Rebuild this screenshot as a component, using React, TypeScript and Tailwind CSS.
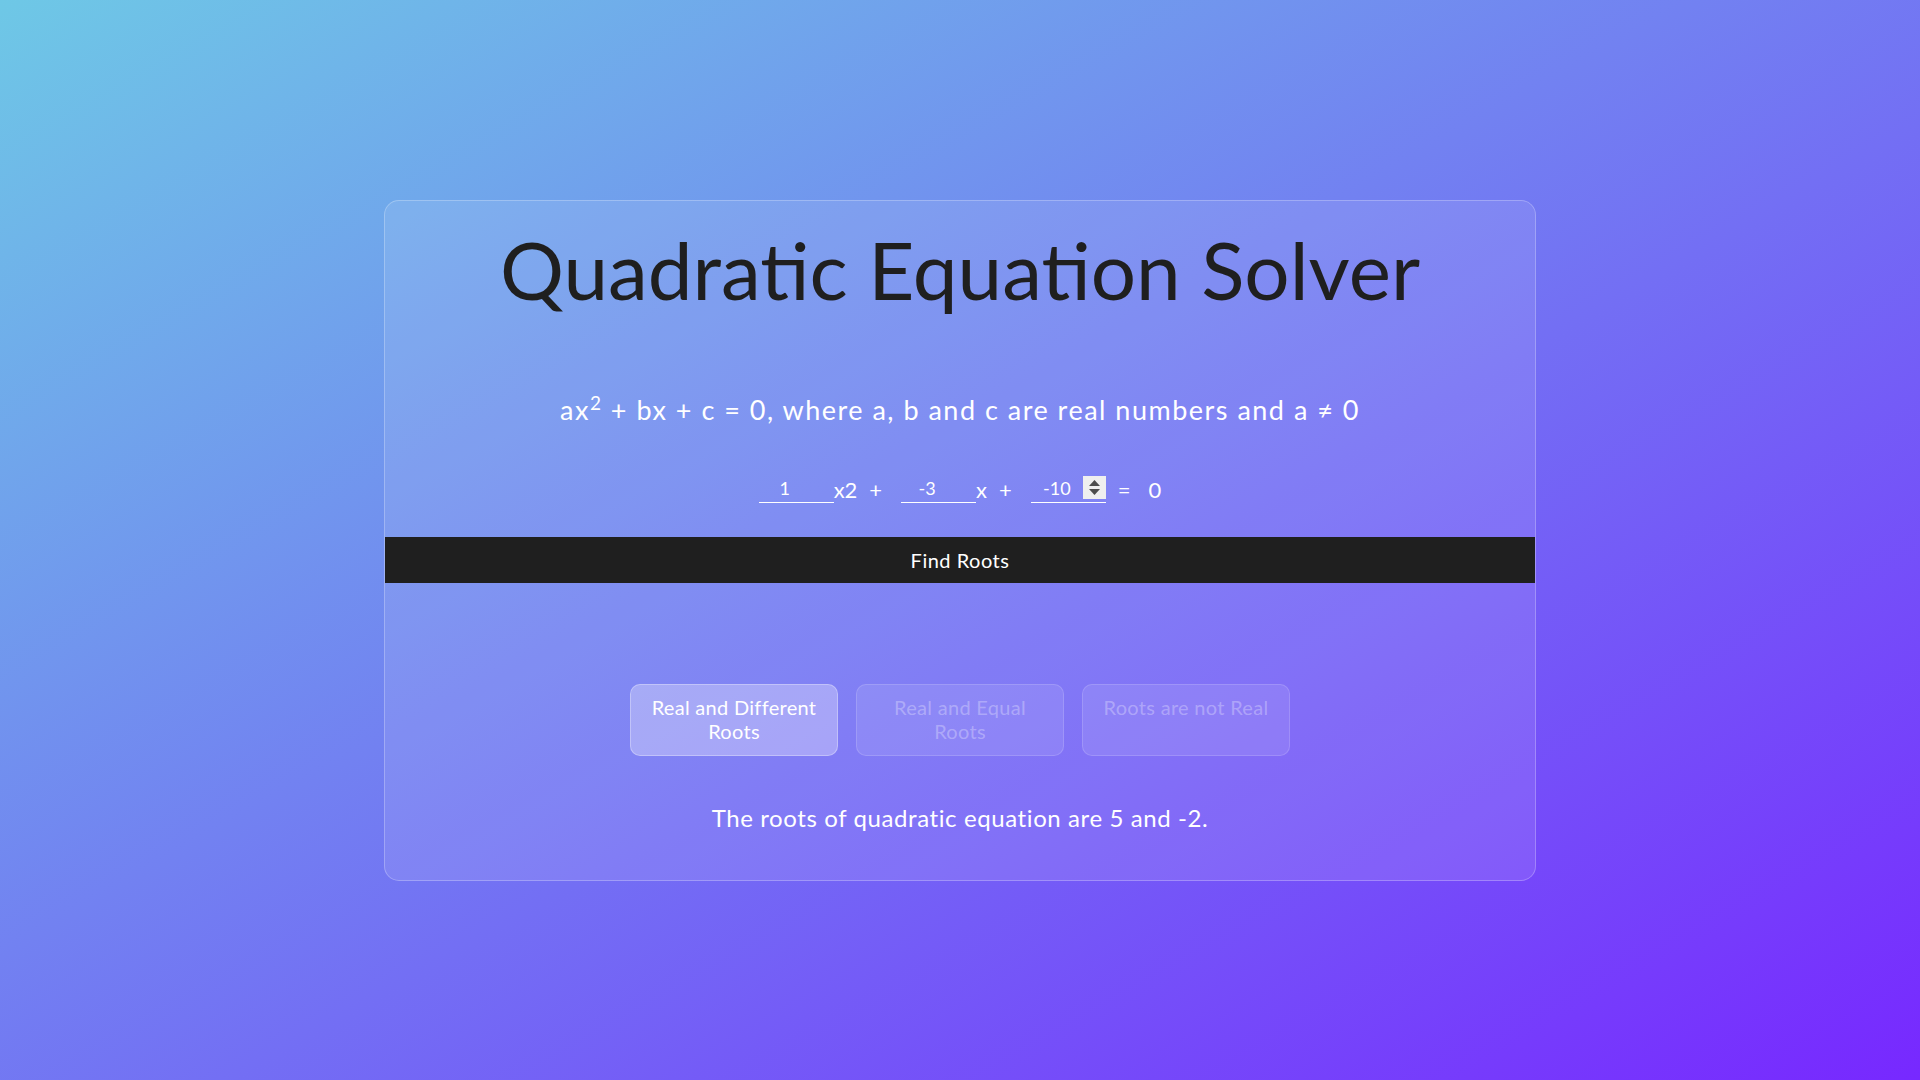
import React from "react";

const font = { fontFamily: "Lato, 'Noto Sans', sans-serif" };

const CoefInput = ({ value, spinner }: { value: string; spinner?: boolean }) => {
  return (
    <div className="flex w-[75px] h-[27px] border-b border-white pb-[3px]">
      <div className="flex-1 pt-[1px] text-center text-[18px] leading-[23px] text-white">{value}</div>
      <div className={`w-[23px] h-[23px] flex flex-col items-center justify-center gap-[3px] ${spinner ? "bg-[#efefef]" : ""}`}>
        {spinner && (
          <>
            <svg width="11" height="6" viewBox="0 0 11 6">
              <polygon points="5.5,0 11,6 0,6" fill="#4d4d4d" />
            </svg>
            <svg width="11" height="6" viewBox="0 0 11 6">
              <polygon points="0,0 11,0 5.5,6" fill="#4d4d4d" />
            </svg>
          </>
        )}
      </div>
    </div>
  );
};

export default function App() {
  return (
    <div
      style={font}
      className="w-full h-screen flex items-center justify-center bg-[linear-gradient(to_bottom_right,#6ec8e6,#7728ff)]"
    >
      <div className="w-[1152px] flex flex-col items-center rounded-[15px] border border-white/25 bg-white/10 pt-[20px] pb-[46px]">
        <h1 className="text-[80px] leading-[96px] text-[#1f1f1f] font-normal">
          Quadratic Equation Solver
        </h1>

        <p className="mt-[77px] text-[27px] leading-[32px] tracking-[1.5px] text-white">
          ax<sup className="text-[19px]">2</sup> + bx + c = 0, where a, b and c are real numbers and a ≠ 0
        </p>

        <div className="mt-[50px] flex items-start text-white text-[22px] leading-[27px]">
          <CoefInput value="1" />
          <span>x2</span>
          <span className="ml-[12px]">+</span>
          <div className="ml-[19px]">
            <CoefInput value="-3" />
          </div>
          <span>x</span>
          <span className="ml-[12px]">+</span>
          <div className="ml-[19px]">
            <CoefInput value="-10" spinner />
          </div>
          <span className="ml-[12px]">=</span>
          <span className="ml-[18px]">0</span>
        </div>

        <button className="mt-[34px] w-full h-[46px] bg-[#1f1f1f] text-white text-[20px] tracking-[0.5px]">
          Find Roots
        </button>

        <div className="mt-[101px] flex gap-[18px]">
          <div className="w-[208px] h-[72px] rounded-[10px] border border-white/30 bg-white/30 pt-[10px] px-[18px] text-center text-[20px] leading-[24px] tracking-[0.3px] text-white">
            Real and Different Roots
          </div>
          <div className="w-[208px] h-[72px] rounded-[10px] border border-white/15 bg-white/10 pt-[10px] px-[18px] text-center text-[20px] leading-[24px] tracking-[0.3px] text-white/30">
            Real and Equal Roots
          </div>
          <div className="w-[208px] h-[72px] rounded-[10px] border border-white/15 bg-white/10 pt-[10px] px-[18px] text-center text-[20px] leading-[24px] tracking-[0.3px] text-white/30">
            Roots are not Real
          </div>
        </div>

        <p className="mt-[46px] text-[24px] leading-[32px] tracking-[0.6px] text-white">
          The roots of quadratic equation are 5 and -2.
        </p>
      </div>
    </div>
  );
}
